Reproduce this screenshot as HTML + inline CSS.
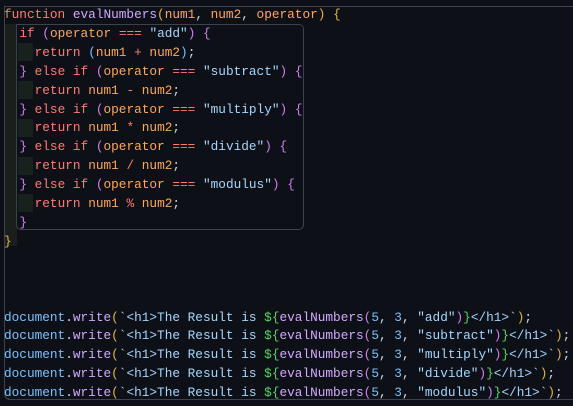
<!DOCTYPE html>
<html><head><meta charset="utf-8"><style>
html,body{margin:0;padding:0;background:#0d1117;width:573px;height:406px;overflow:hidden}
.c{position:absolute;left:4px;top:6px;font-family:"Liberation Mono",monospace;font-size:12.75px;line-height:18.9px;white-space:pre;color:#d0d7de}
.outer{position:absolute;left:4px;top:6px;width:580px;height:394px;border:1px solid #3d434b;border-radius:0 6px 6px 6px;box-sizing:border-box}
.inner{position:absolute;left:16px;top:24px;width:288px;height:206px;border:1px solid #3d434b;border-radius:0 5px 5px 5px;box-sizing:border-box}
.guide{position:absolute;left:5px;top:24px;width:12px;height:222px;background:#1a1f1c}
.sq{position:absolute;left:18px;width:15px;height:18px;background:#17211d}
.k{color:#ff7b72}.o{color:#ffa657}.f{color:#d2a8ff}.s{color:#79c0ff}.p{color:#d27df2}.y{color:#e3b341}.t{color:#a5d6ff}.g{color:#56d364}.d{color:#79c0ff}.q{color:#a5d6ff}
</style></head><body>
<div class="guide"></div>
<div class="sq" style="top:43px"></div><div class="sq" style="top:81px"></div><div class="sq" style="top:119px"></div><div class="sq" style="top:157px"></div><div class="sq" style="top:194px"></div>
<div class="outer"></div><div class="inner"></div>
<div class="c"><span class="k">function</span> <span class="f">evalNumbers</span><span class="y">(</span><span class="o">num1</span>, <span class="o">num2</span>, <span class="o">operator</span><span class="y">)</span> <span class="y">{</span>
  <span class="k">if</span> <span class="p">(</span><span class="o">operator</span> <span class="k">===</span> <span class="q">"add"</span><span class="p">)</span> <span class="p">{</span>
    <span class="k">return</span> <span class="s">(</span><span class="o">num1</span> <span class="k">+</span> <span class="o">num2</span><span class="s">)</span>;
  <span class="p">}</span> <span class="k">else if</span> <span class="p">(</span><span class="o">operator</span> <span class="k">===</span> <span class="q">"subtract"</span><span class="p">)</span> <span class="p">{</span>
    <span class="k">return</span> <span class="o">num1</span> <span class="k">-</span> <span class="o">num2</span>;
  <span class="p">}</span> <span class="k">else if</span> <span class="p">(</span><span class="o">operator</span> <span class="k">===</span> <span class="q">"multiply"</span><span class="p">)</span> <span class="p">{</span>
    <span class="k">return</span> <span class="o">num1</span> <span class="k">*</span> <span class="o">num2</span>;
  <span class="p">}</span> <span class="k">else if</span> <span class="p">(</span><span class="o">operator</span> <span class="k">===</span> <span class="q">"divide"</span><span class="p">)</span> <span class="p">{</span>
    <span class="k">return</span> <span class="o">num1</span> <span class="k">/</span> <span class="o">num2</span>;
  <span class="p">}</span> <span class="k">else if</span> <span class="p">(</span><span class="o">operator</span> <span class="k">===</span> <span class="q">"modulus"</span><span class="p">)</span> <span class="p">{</span>
    <span class="k">return</span> <span class="o">num1</span> <span class="k">%</span> <span class="o">num2</span>;
  <span class="p">}</span>
<span class="y">}</span>



<span class="d">document</span>.<span class="f">write</span><span class="y">(</span><span class="t">`&lt;h1&gt;The Result is </span><span class="g">${</span><span class="f">evalNumbers</span><span class="p">(</span><span class="s">5</span>, <span class="s">3</span>, <span class="t">"add"</span><span class="p">)</span><span class="g">}</span><span class="t">&lt;/h1&gt;`</span><span class="y">)</span>;
<span class="d">document</span>.<span class="f">write</span><span class="y">(</span><span class="t">`&lt;h1&gt;The Result is </span><span class="g">${</span><span class="f">evalNumbers</span><span class="p">(</span><span class="s">5</span>, <span class="s">3</span>, <span class="t">"subtract"</span><span class="p">)</span><span class="g">}</span><span class="t">&lt;/h1&gt;`</span><span class="y">)</span>;
<span class="d">document</span>.<span class="f">write</span><span class="y">(</span><span class="t">`&lt;h1&gt;The Result is </span><span class="g">${</span><span class="f">evalNumbers</span><span class="p">(</span><span class="s">5</span>, <span class="s">3</span>, <span class="t">"multiply"</span><span class="p">)</span><span class="g">}</span><span class="t">&lt;/h1&gt;`</span><span class="y">)</span>;
<span class="d">document</span>.<span class="f">write</span><span class="y">(</span><span class="t">`&lt;h1&gt;The Result is </span><span class="g">${</span><span class="f">evalNumbers</span><span class="p">(</span><span class="s">5</span>, <span class="s">3</span>, <span class="t">"divide"</span><span class="p">)</span><span class="g">}</span><span class="t">&lt;/h1&gt;`</span><span class="y">)</span>;
<span class="d">document</span>.<span class="f">write</span><span class="y">(</span><span class="t">`&lt;h1&gt;The Result is </span><span class="g">${</span><span class="f">evalNumbers</span><span class="p">(</span><span class="s">5</span>, <span class="s">3</span>, <span class="t">"modulus"</span><span class="p">)</span><span class="g">}</span><span class="t">&lt;/h1&gt;`</span><span class="y">)</span>;</div>
</body></html>
